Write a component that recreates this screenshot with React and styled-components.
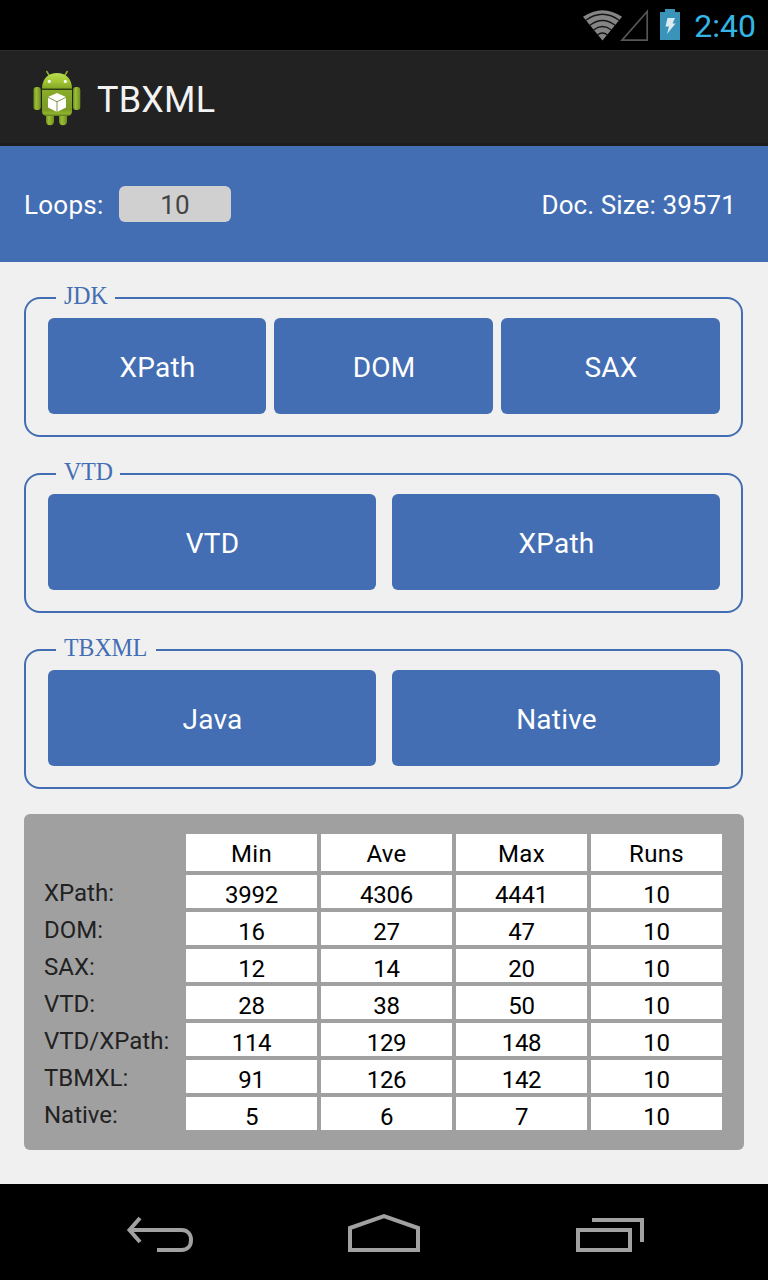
import React from 'react';
import styled, { createGlobalStyle } from 'styled-components';

const BLUE = '#436eb3';

const GlobalStyle = createGlobalStyle`
  *, *::before, *::after { box-sizing: border-box; }
  body { margin: 0; background: #f0f0f0; }
`;

const Screen = styled.div`
  width: 768px;
  height: 1280px;
  display: flex;
  flex-direction: column;
  background: #f0f0f0;
  font-family: Roboto, sans-serif;
  overflow: hidden;
`;

const Label = styled.span`
  display: block;
  white-space: nowrap;
  font-size: ${(p) => p.$size}px;
  line-height: ${(p) => p.$line || p.$size + 4}px;
  letter-spacing: ${(p) => p.$track || 0}px;
  color: ${(p) => p.$color || '#fff'};
`;

const StatusBar = styled.header`
  height: 50px;
  flex: none;
  display: flex;
  justify-content: flex-end;
  align-items: center;
  padding: 1px 12px 0 0;
  background: #000;
`;

const StatusIcons = styled.svg`
  display: block;
  width: 112px;
  height: 50px;
`;

const ActionBar = styled.div`
  height: 96px;
  flex: none;
  display: flex;
  align-items: center;
  gap: 9px;
  padding: 2px 0 0 24px;
  background: #222;
  border-top: 1px solid #2d2d2d;
  border-bottom: 3px solid #1c1c1c;
`;

const Title = styled(Label)`
  padding-top: 4px;
`;

const AppIcon = styled.svg`
  display: block;
  width: 64px;
  height: 64px;
`;

const Summary = styled.section`
  height: 116px;
  flex: none;
  display: flex;
  align-items: center;
  padding: 2px 32px 0 24px;
  background: ${BLUE};
`;

const LoopField = styled.div`
  width: 112px;
  height: 36px;
  margin: 0 auto 2px 16px;
  padding: 2px 1px 0 0;
  display: flex;
  align-items: center;
  justify-content: center;
  border-radius: 6px;
  background: #d0d0d0;
`;

const Content = styled.main`
  flex: 1;
  display: flex;
  flex-direction: column;
  padding: 24px 24px 0;
`;

const Group = styled.fieldset`
  width: 719px;
  height: 151px;
  margin: 0 0 25px;
  padding: 8px 21px 0 22px;
  min-width: 0;
  border: 2px solid ${BLUE};
  border-radius: 16px;
`;

const GroupTitle = styled.legend`
  width: ${(p) => p.$width}px;
  height: 24px;
  margin-left: 8px;
  padding: 0 8px;
  font: 26px/19px "Liberation Serif", serif;
  white-space: nowrap;
  color: ${BLUE};
`;

const Condensed = styled.span`
  display: block;
  transform: scaleX(0.915);
  transform-origin: left;
`;

const ButtonRow = styled.div`
  display: flex;
  gap: ${(p) => p.$gap}px;
`;

const ParserButton = styled.button`
  flex: 1 1 0;
  height: 96px;
  padding: 3px 0 0 1px;
  display: flex;
  align-items: center;
  justify-content: center;
  border: 0;
  border-radius: 6px;
  background: ${BLUE};
  font-family: inherit;

  &:first-child:nth-last-child(3) {
    flex: 0 0 218px;
  }
`;

const Results = styled.section`
  height: 336px;
  display: grid;
  grid-template-columns: 138px repeat(4, 131px);
  grid-template-rows: 37px repeat(7, 33px);
  gap: 4px;
  padding: 20px;
  border-radius: 6px;
  background: #a0a0a0;
`;

const RowName = styled.div`
  display: flex;
  align-items: center;
  padding-top: 2px;
`;

const Cell = styled.div`
  display: flex;
  align-items: center;
  justify-content: center;
  padding-top: ${(p) => (p.$head ? 2 : 7)}px;
  background: #fff;
`;

const NavBar = styled.nav`
  height: 96px;
  flex: none;
  display: flex;
  justify-content: space-between;
  padding: 0 104px;
  background: #000;
`;

const NavIcon = styled.svg`
  display: block;
  width: 112px;
  height: 96px;
  fill: none;
  stroke: #a1a1a1;
  stroke-width: 4;
`;

const groups = [
  { title: 'JDK', width: 59, gap: 8, buttons: ['XPath', 'DOM', 'SAX'] },
  { title: 'VTD', width: 64, gap: 16, buttons: ['VTD', 'XPath'] },
  { title: 'TBXML', width: 99.5, gap: 16, buttons: ['Java', 'Native'] },
];

const columns = ['Min', 'Ave', 'Max', 'Runs'];

const rows = [
  ['XPath:', 3992, 4306, 4441, 10],
  ['DOM:', 16, 27, 47, 10],
  ['SAX:', 12, 14, 20, 10],
  ['VTD:', 28, 38, 50, 10],
  ['VTD/XPath:', 114, 129, 148, 10],
  ['TBMXL:', 91, 126, 142, 10],
  ['Native:', 5, 6, 7, 10],
];

function SignalIcons() {
  return (
    <StatusIcons viewBox="582 1 112 50">
      <path d="M602.5 40.5L583 16.8Q602.5 3.500 622 16.800Z" fill="#858585" />
      <g fill="none" stroke="#151515" strokeWidth="1.3">
        <path d="M585.5 20.5Q602.5 8 619.5 20.5" />
        <path d="M589.5 25.5Q602.5 15.5 615.5 25.5" />
        <path d="M593.5 30Q602.5 23 611.5 30" />
        <path d="M597.5 35Q602.5 31 607.5 35" />
      </g>
      <path d="M622 40.2H647.2V11.5Z" fill="none" stroke="#555" strokeWidth="1.7" />
      <path d="M660 12H665V9H675V12H680V40H660Z" fill="#3a94b9" />
      <path d="M667.5 18H675L672.5 23.5H675.5L667 34L669 26.5H665.5Z" fill="#dcecf2" />
    </StatusIcons>
  );
}

function Robot() {
  return (
    <AppIcon viewBox="24 66 64 64">
      <defs>
        <linearGradient id="head" x1="0" y1="0" x2="0" y2="1">
          <stop offset="0" stopColor="#badc53" />
          <stop offset="0.5" stopColor="#a4c936" />
          <stop offset="1" stopColor="#83a624" />
        </linearGradient>
        <linearGradient id="body" x1="0" y1="0" x2="0" y2="1">
          <stop offset="0" stopColor="#89ac29" />
          <stop offset="0.75" stopColor="#7a9a25" />
          <stop offset="0.9" stopColor="#90b32e" />
          <stop offset="1" stopColor="#5f7c19" />
        </linearGradient>
        <linearGradient id="limb" x1="0" y1="0" x2="1" y2="0">
          <stop offset="0" stopColor="#6c8c1d" />
          <stop offset="0.35" stopColor="#9bc037" />
          <stop offset="1" stopColor="#6e8e1e" />
        </linearGradient>
      </defs>
      <path d="M46.8 71.5L49.5 76M67.2 71.5L64.5 76" stroke="#8aab2b" strokeWidth="1.6" strokeLinecap="round" />
      <rect x="46" y="110" width="8" height="15.3" rx="4" fill="url(#limb)" />
      <rect x="59" y="110" width="8" height="15.3" rx="4" fill="url(#limb)" />
      <rect x="33.5" y="87" width="7.3" height="23" rx="3.2" fill="url(#limb)" />
      <rect x="73" y="87" width="7.3" height="23" rx="3.2" fill="url(#limb)" />
      <path d="M42 90H72V111Q72 116 67 116H47Q42 116 42 111Z" fill="url(#body)" />
      <path d="M42 88.7C42 78.5 48.5 73 57 73S72 78.5 72 88.7Z" fill="url(#head)" />
      <path d="M42 89.3H72" stroke="#33440a" strokeWidth="1.1" />
      <circle cx="49.3" cy="81.4" r="1.6" fill="#fff" />
      <circle cx="65.3" cy="81.4" r="1.6" fill="#fff" />
      <path d="M57 93L66 97V107.5L57 112L48 107.5V97Z" fill="#fff" />
      <path d="M48 97.3L57 101.8L66 97.3M57 101.8V112" fill="none" stroke="#718d31" strokeWidth="0.9" />
    </AppIcon>
  );
}

export default function App() {
  return (
    <>
      <GlobalStyle />
      <Screen>
        <StatusBar>
          <SignalIcons />
          <Label $size={32} $line={50} $color="#33b5e5">2:40</Label>
        </StatusBar>
        <ActionBar>
          <Robot />
          <Title $size={36} $line={42} $track={0.2} $color="#f3f3f3">TBXML</Title>
        </ActionBar>
        <Summary>
          <Label $size={26} $track={0.25}>Loops:</Label>
          <LoopField>
            <Label $size={26} $color="#444">10</Label>
          </LoopField>
          <Label $size={26} $track={0.1}>Doc. Size: 39571</Label>
        </Summary>
        <Content>
          {groups.map((g) => (
            <Group key={g.title}>
              <GroupTitle $width={g.width}>
                <Condensed>{g.title}</Condensed>
              </GroupTitle>
              <ButtonRow $gap={g.gap}>
                {g.buttons.map((b) => (
                  <ParserButton key={b}>
                    <Label $size={28} $track={0.2}>{b}</Label>
                  </ParserButton>
                ))}
              </ButtonRow>
            </Group>
          ))}
          <Results>
            <RowName />
            {columns.map((c) => (
              <Cell key={c} $head>
                <Label $size={24} $track={0.3} $color="#000">{c}</Label>
              </Cell>
            ))}
            {rows.map(([name, ...values]) => (
              <React.Fragment key={name}>
                <RowName>
                  <Label $size={24} $color="#222">{name}</Label>
                </RowName>
                {values.map((v, i) => (
                  <Cell key={i}>
                    <Label $size={24} $track={-0.3} $color="#000">{v}</Label>
                  </Cell>
                ))}
              </React.Fragment>
            ))}
          </Results>
        </Content>
        <NavBar>
          <NavIcon viewBox="104 1184 112 96">
            <path d="M129 1230H181.5C187.5 1230 191 1234 191 1240S187.500 1250 181.500 1250H157M140 1218L129.500 1230L140 1242" />
          </NavIcon>
          <NavIcon viewBox="328 1184 112 96">
            <path d="M350 1250V1228L384 1216.200L418 1228V1250Z" />
          </NavIcon>
          <NavIcon viewBox="552 1184 112 96">
            <path d="M578 1230H630V1250H578ZM592 1220H642V1242" />
          </NavIcon>
        </NavBar>
      </Screen>
    </>
  );
}
